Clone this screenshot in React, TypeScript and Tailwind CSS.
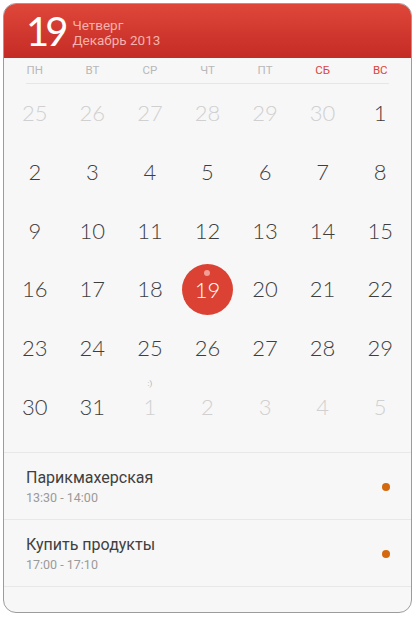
import React from "react";

const weekdays = [
  { t: "ПН", red: false },
  { t: "ВТ", red: false },
  { t: "СР", red: false },
  { t: "ЧТ", red: false },
  { t: "ПТ", red: false },
  { t: "СБ", red: true },
  { t: "ВС", red: true },
];

type Day = { d: number; muted?: boolean; today?: boolean; smile?: boolean };

const rows: Day[][] = [
  [25, 26, 27, 28, 29, 30].map((d) => ({ d, muted: true })).concat([{ d: 1 }]),
  [2, 3, 4, 5, 6, 7, 8].map((d) => ({ d })),
  [9, 10, 11, 12, 13, 14, 15].map((d) => ({ d })),
  [16, 17, 18, 19, 20, 21, 22].map((d) => ({ d, today: d === 19 })),
  [23, 24, 25, 26, 27, 28, 29].map((d) => ({ d })),
  [
    { d: 30 },
    { d: 31 },
    { d: 1, muted: true, smile: true },
    { d: 2, muted: true },
    { d: 3, muted: true },
    { d: 4, muted: true },
    { d: 5, muted: true },
  ],
];

const events = [
  { title: "Парикмахерская", time: "13:30 - 14:00" },
  { title: "Купить продукты", time: "17:00 - 17:10" },
];

export default function App() {
  return (
    <div className="w-[415px] h-[619px] bg-white pt-[3px] pl-[3px]">
      <div className="w-[409px] h-[610px] border border-[#9c9c9c] rounded-[13px] overflow-hidden bg-[#f7f7f7] flex flex-col">
        <div className="h-[54px] shrink-0 bg-gradient-to-b from-[#e0473a] to-[#c32b25] flex items-center pl-[22px]">
          <div
            className="text-white text-[40px] font-normal leading-none tracking-[-4px]"
            style={{ fontFamily: "Lato, sans-serif" }}
          >
            19
          </div>
          <div
            className="ml-[8px] flex flex-col text-[#f5b3ab] text-[13.5px] leading-[15px] pt-[3px]"
            style={{ fontFamily: "Roboto, sans-serif" }}
          >
            <span>Четверг</span>
            <span>Декабрь 2013</span>
          </div>
        </div>

        <div
          className="h-[25px] shrink-0 grid grid-cols-7 px-[2px] items-center text-[11.5px]"
          style={{ fontFamily: "Roboto, sans-serif" }}
        >
          {weekdays.map((w) => (
            <div
              key={w.t}
              className={`text-center pt-[1px] ${w.red ? "text-[#d8463b]" : "text-[#b8b8b8]"}`}
            >
              {w.t}
            </div>
          ))}
        </div>
        <div className="mx-[22px] h-px bg-[#e6e6e6] shrink-0" />

        <div className="px-[2px] shrink-0" style={{ fontFamily: "Lato, sans-serif" }}>
          {rows.map((row, ri) => (
            <div key={ri} className="grid grid-cols-7 h-[58.7px]">
              {row.map((day, di) => (
                <div key={di} className="flex items-center justify-center relative">
                  {day.today ? (
                    <div className="w-[51px] h-[51px] rounded-full bg-[#dc4234] flex items-center justify-center relative">
                      <span className="absolute top-[6px] left-1/2 -translate-x-1/2 w-[6px] h-[6px] rounded-full bg-[#f09e96]" />
                      <span className="text-white text-[22px] font-light leading-none pt-[2px]">
                        {day.d}
                      </span>
                    </div>
                  ) : (
                    <>
                      {day.smile && (
                        <span
                          className="absolute top-[3px] left-1/2 -translate-x-1/2 text-[8px] text-[#b0b0b0] leading-none"
                          style={{ fontFamily: "Roboto, sans-serif" }}
                        >
                          :)
                        </span>
                      )}
                      <span
                        className={`text-[22px] font-light leading-none ${
                          day.muted ? "text-[#d0d0d0]" : "text-[#3e3e3e]"
                        }`}
                      >
                        {day.d}
                      </span>
                    </>
                  )}
                </div>
              ))}
            </div>
          ))}
        </div>

        <div className="h-[16px] shrink-0" />
        <div className="h-px bg-[#e8e8e8] shrink-0" />
        <div style={{ fontFamily: "Roboto, sans-serif" }}>
          {events.map((e) => (
            <div key={e.title}>
              <div className="h-[66px] flex items-center pl-[22px] pr-[21px]">
                <div className="flex-1 flex flex-col pt-[2px]">
                  <span className="text-[16px] text-[#404040] leading-[20px]">{e.title}</span>
                  <span className="text-[12.5px] text-[#9a9a9a] leading-[16px] mt-[2px]">{e.time}</span>
                </div>
                <span className="w-[8px] h-[8px] rounded-full bg-[#d4680f] mt-[2px]" />
              </div>
              <div className="h-px bg-[#e8e8e8]" />
            </div>
          ))}
        </div>
      </div>
    </div>
  );
}
